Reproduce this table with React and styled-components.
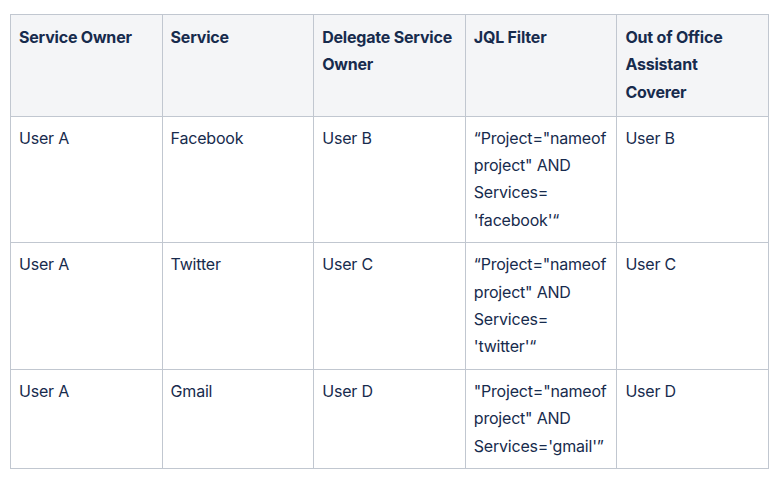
import React from 'react'
import styled, { createGlobalStyle } from 'styled-components'

const GlobalStyle = createGlobalStyle`
  body {
    margin: 0;
    background: #fff;
    font-family: Inter, "Noto Sans", sans-serif;
    color: #172b4d;
  }
`

const Page = styled.div`
  padding: 14px 10px;
`

const Table = styled.table`
  border-collapse: collapse;
  table-layout: fixed;
  width: 759px;
  font-size: 16px;
  line-height: 27.4px;
  letter-spacing: -0.2px;
`

const HeadCell = styled.th`
  background: #f4f5f7;
  border: 1px solid #c1c7d0;
  padding: 9px 9px 9.4px 8px;
  text-align: left;
  vertical-align: top;
  font-weight: 700;
`

const Cell = styled.td`
  border: 1px solid #c1c7d0;
  padding: 8px 9px 8px 8px;
  vertical-align: top;
  font-weight: 400;
`

const columns = [
  'Service Owner',
  'Service',
  'Delegate Service Owner',
  'JQL Filter',
  'Out of Office Assistant Coverer'
]

const rows = [
  ['User A', 'Facebook', 'User B', '\u201CProject="nameof project" AND Services= \'facebook\'\u201C', 'User B'],
  ['User A', 'Twitter', 'User C', '\u201CProject="nameof project" AND Services= \'twitter\'\u201C', 'User C'],
  ['User A', 'Gmail', 'User D', '"Project="nameof project" AND Services=\'gmail\'\u201D', 'User D']
]

const App = () => (
  <Page>
    <GlobalStyle />
    <Table>
      <thead>
        <tr>
          {columns.map(c => (
            <HeadCell key={c}>{c}</HeadCell>
          ))}
        </tr>
      </thead>
      <tbody>
        {rows.map((r, i) => (
          <tr key={i}>
            {r.map((v, j) => (
              <Cell key={j}>{v}</Cell>
            ))}
          </tr>
        ))}
      </tbody>
    </Table>
  </Page>
)

export default App
